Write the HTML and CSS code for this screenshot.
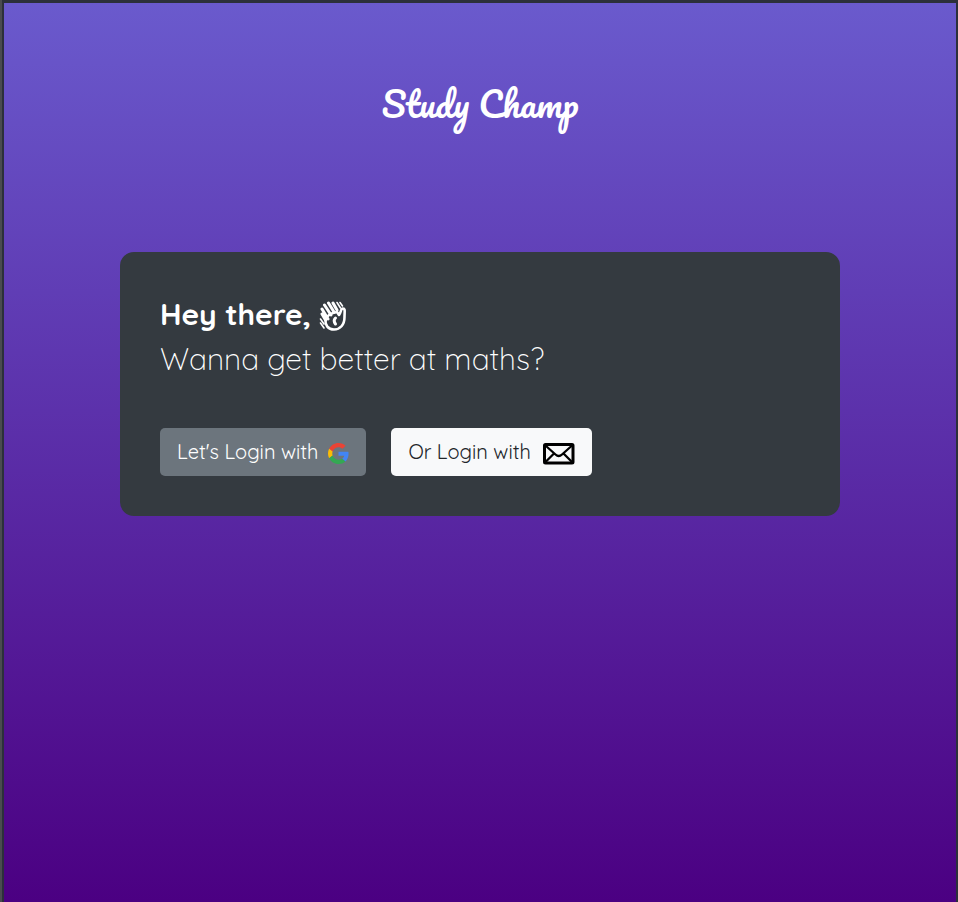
FILE: index.html
```html
<!DOCTYPE html>
<html lang="en">
<head>
<meta charset="utf-8">
<meta name="viewport" content="width=device-width, initial-scale=1">
<title>Study Champ</title>
<link rel="stylesheet" href="styles.css">
</head>
<body>
<main class="page">
  <h1 class="brand">Study Champ</h1>
  <section class="card">
    <h2 class="greeting">Hey there,
      <svg class="wave" viewBox="0 0 28 30" aria-hidden="true" fill="none" stroke="currentColor" stroke-linecap="round" stroke-linejoin="round">
        <path stroke-width="3" d="M3 8 L9 18 M5.500 4 L12 14 M9.500 2 L15 11 M14 2 L18 9 M3 13 L6.500 19"/>
        <path stroke-width="1.600" d="M18 1.500 L21.500 7 M21 1.500 L23.500 5 M1.500 18 L5 23 M1.500 22 L5 27"/>
        <path stroke-width="2.600" d="M18 11 L20 14 C22 12 21.500 7.500 24 7.500 C26.500 7.500 25.500 11 25.500 16 C25.500 24 21 28.500 15 28.500 C9 28.500 6 24 6.500 19 C7.500 15 12 12 18 11 Z"/>
        <path stroke-width="3" d="M16.500 17 C14.500 19 15 21 16.500 23"/>
      </svg>
    </h2>
    <p class="question">Wanna get better at maths?</p>
    <div class="actions">
      <button class="button button-google" type="button" aria-label="Let's Login with Google">
        <span>Let's Login with</span>
        <svg class="icon google" viewBox="0 0 48 48" aria-hidden="true">
          <path fill="#ea4335" d="M24 9.500c3.540 0 6.710 1.220 9.210 3.600l6.850-6.850C35.900 2.380 30.470 0 24 0 14.620 0 6.510 5.380 2.560 13.220l7.980 6.190C12.430 13.720 17.740 9.500 24 9.500z"/>
          <path fill="#4285f4" d="M46.980 24.550c0-1.570-.15-3.090-.38-4.550H24v9.020h12.940c-.58 2.960-2.260 5.480-4.780 7.180l7.730 6c4.510-4.180 7.090-10.360 7.090-17.650z"/>
          <path fill="#fbbc05" d="M10.530 28.590c-.48-1.450-.76-2.990-.76-4.590s.27-3.140.76-4.590l-7.980-6.190C.92 16.460 0 20.120 0 24c0 3.880.92 7.540 2.560 10.780l7.970-6.190z"/>
          <path fill="#34a853" d="M24 48c6.480 0 11.930-2.130 15.890-5.810l-7.730-6c-2.150 1.450-4.920 2.300-8.160 2.300-6.260 0-11.570-4.220-13.470-9.910l-7.980 6.190C6.510 42.620 14.620 48 24 48z"/>
        </svg>
      </button>
      <button class="button button-mail" type="button" aria-label="Or Login with email">
        <span>Or Login with</span>
        <svg class="icon mail" viewBox="0 0 32 22" aria-hidden="true" fill="none" stroke="currentColor" stroke-linecap="round" stroke-linejoin="round">
          <rect x="1.500" y="1.500" width="28.500" height="18.500" rx="1" stroke-width="3"/>
          <path stroke-width="2.300" d="M3 3 L12.500 11.500 Q15.750 14.500 19 11.500 L28.500 3 M3 18.500 L11 10.500 M28.500 18.500 L20.500 10.500"/>
        </svg>
      </button>
    </div>
  </section>
</main>
</body>
</html>
```
FILE: styles.css
```css
* {
  box-sizing: border-box;
}

body {
  margin: 0;
  min-height: 100vh;
  display: flex;
  border: solid #4a4b50;
  border-width: 0 0 0 2px;
  font-family: Quicksand, Lato, sans-serif;
}

.page {
  flex: 1;
  padding: 68px 24px 0;
  border: solid #2c303b;
  border-width: 3px 2px 0;
  background: linear-gradient(#6a5acd, #4b0082);
}

.brand {
  margin: 0 0 116px;
  color: #fff;
  font-family: Pacifico, Lato, cursive;
  font-size: 35px;
  font-weight: 400;
  line-height: 65px;
  text-align: center;
}

.card {
  max-width: 720px;
  margin: 0 auto;
  padding: 40px;
  border-radius: 14px;
  background: #343a40;
  color: #fff;
}

.greeting {
  display: flex;
  align-items: center;
  gap: 8px;
  margin: 0;
  font-size: 30px;
  font-weight: 700;
  line-height: 45px;
}

.wave {
  width: 28px;
  height: 30px;
  margin-top: 3px;
}

.question {
  margin: 0 0 46px;
  font-size: 30px;
  font-weight: 300;
  line-height: 45px;
}

.actions {
  display: flex;
  flex-wrap: wrap;
  gap: 25px;
}

.button {
  display: flex;
  align-items: center;
  height: 48px;
  padding: 0 17px 2px;
  border: 0;
  border-radius: 5px;
  font-family: inherit;
  font-size: 20px;
  cursor: pointer;
}

.button-google {
  gap: 10px;
  background: #6c757d;
  color: #fff;
}

.button-mail {
  gap: 12px;
  background: #f8f9fa;
  color: #212529;
}

.icon {
  margin-top: 5px;
}

.google {
  width: 21px;
  height: 21px;
}

.mail {
  width: 32px;
  height: 22px;
  color: #000;
}
```
